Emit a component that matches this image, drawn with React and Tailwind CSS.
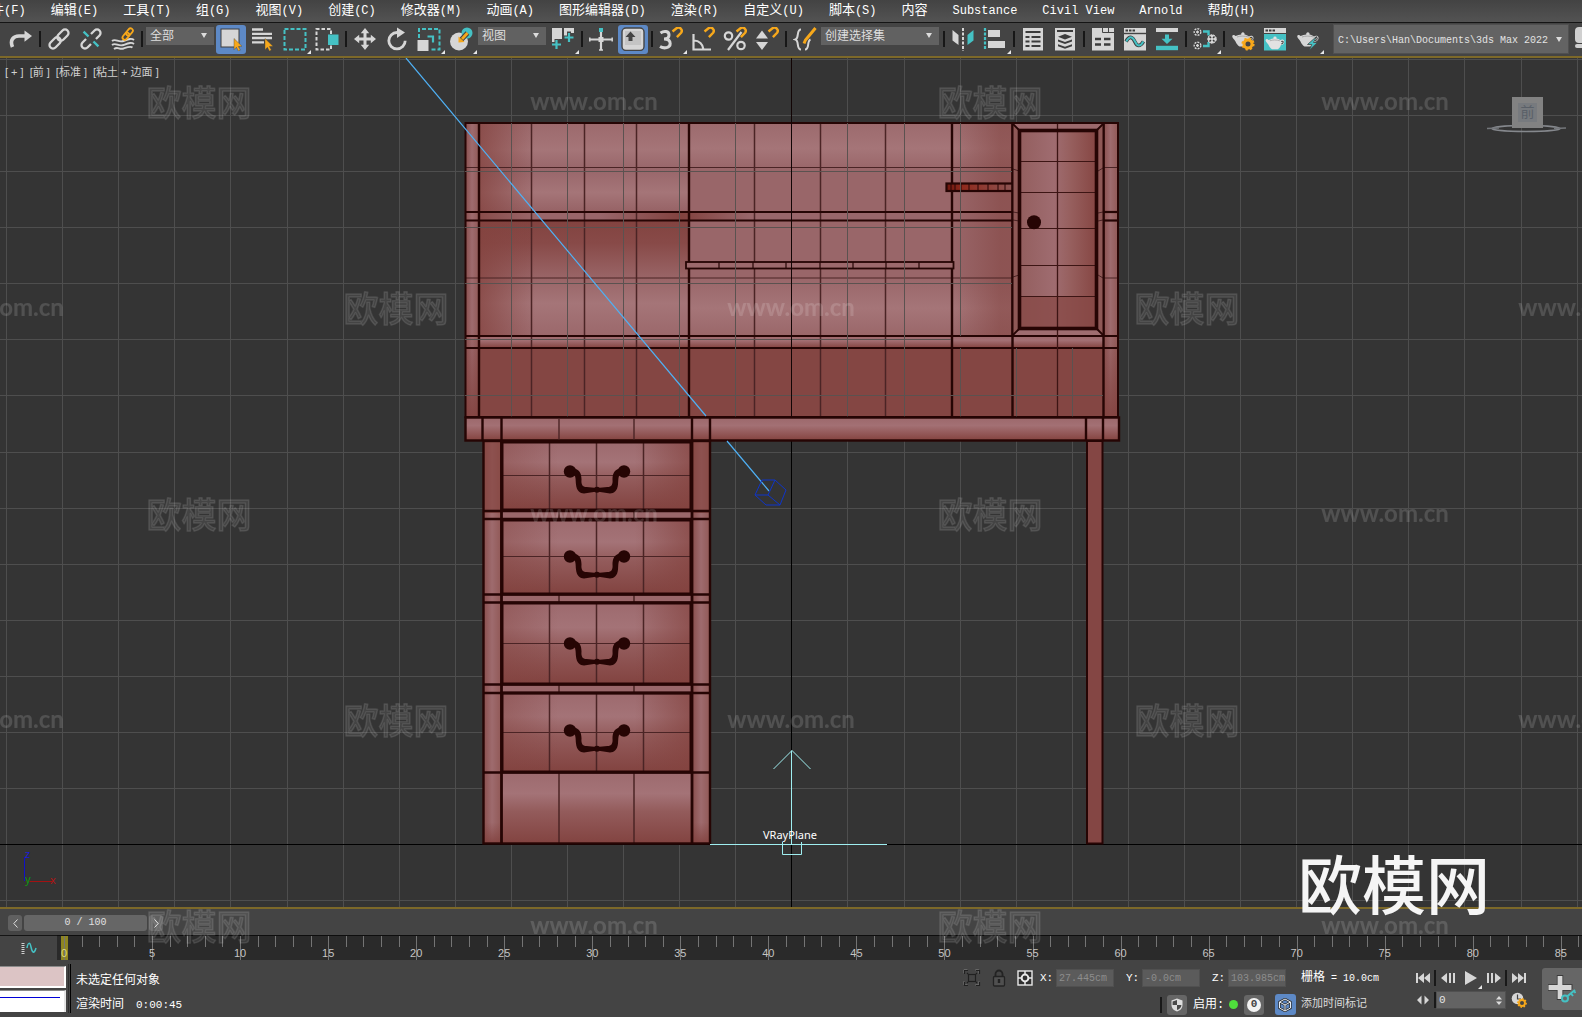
import React from "react";

const CJK = "font-['Liberation_Sans','Noto_Sans_CJK_SC',sans-serif]";
const MONO = "font-['Liberation_Mono','Noto_Sans_CJK_SC',monospace]";

/* ---------- menu bar ---------- */

const MENUS = [
  ["文件", "(F)"], ["编辑", "(E)"], ["工具", "(T)"], ["组", "(G)"], ["视图", "(V)"],
  ["创建", "(C)"], ["修改器", "(M)"], ["动画", "(A)"], ["图形编辑器", "(D)"],
  ["渲染", "(R)"], ["自定义", "(U)"], ["脚本", "(S)"], ["内容", ""],
  ["", "Substance"], ["", "Civil View"], ["", "Arnold"], ["帮助", "(H)"],
];

function MenuBar() {
  return (
    <nav className="shrink-0 overflow-hidden border-b border-[#151515] bg-gradient-to-b from-[#434343] to-[#535353]">
      <div className={`-ml-[22px] flex h-[22px] gap-[25px] whitespace-nowrap pb-px text-white ${MONO}`}>
        {MENUS.map(([zh, en]) => (
          <button key={zh + en} type="button" className="flex shrink-0 items-center">
            {zh && <span className="text-[13px] leading-5">{zh}</span>}
            {en && <span className="text-xs leading-5">{en}</span>}
          </button>
        ))}
      </div>
    </nav>
  );
}

/* ---------- toolbar ---------- */

const L = "#d6d6d6";
const T = "#45c1c4";
const Y = "#f7a81b";

function Tool({ label, active, flyout, children }) {
  return (
    <button
      type="button"
      aria-label={label}
      title={label}
      className={
        "relative flex h-[29px] shrink-0 items-center justify-center " +
        (active ? "mx-px w-[30px] rounded-[3px] bg-[#5d89c6]" : "w-8")
      }
    >
      <svg viewBox="0 0 24 24" className="size-6" fill="none" aria-hidden="true">
        {children}
      </svg>
      {flyout && (
        <svg viewBox="0 0 4 4" className="absolute bottom-0 right-0 size-1" aria-hidden="true">
          <path d="M4 0V4H0Z" fill="#e8e8e8" />
        </svg>
      )}
    </button>
  );
}

const Sep = () => <span className="mx-0.5 h-4 w-0.5 shrink-0 bg-[#171717]" />;

const Cursor = () => (
  <path d="M15 11.5l8 7.8-3.600.2 2 3.6-2 1-2-3.800-2.400 2.400z" fill={Y} stroke="#444" strokeWidth=".4" />
);

const Magnet = () => (
  <path d="M13.500 4.500l4-3.300a3.300 3.300 0 0 1 4.600 4.600l-4.200 4.400" stroke={Y} strokeWidth="2.400" />
);

const TEAPOT = "M4.500 9c-1-1.500-3-1.200-3.300.1C1 11 3 12 4.500 14.500 5.500 17 7 18.500 8.500 19.500h6.500c2-1 3-2.500 3.500-4.500 3-.5 4.300-2.500 4-4.500-.4-2-3-2.500-4.500-1-1.500-1.200-3-1.700-4.500-2a1.700 1.700 0 1 0-3.200 0c-2 .3-3.600.8-5.800 1.500z";

function Teapot({ fill = L }) {
  return (
    <g>
      <path d={TEAPOT} fill={fill} />
      <path d="M19 10.800c1.300-.8 2.300-.2 2.200.9-.1 1-1 1.700-2.200 1.900" stroke="#444" strokeWidth="1.200" />
      <path d="M6 10c3-1.200 8-1.200 11.500 0" stroke="#888" strokeWidth=".6" />
    </g>
  );
}

function Combo({ label, value, className }) {
  return (
    <div className={"relative h-[18px] shrink-0 bg-[#616161] " + className}>
      <select
        aria-label={label}
        defaultValue={value}
        className={`-mt-0.5 block h-[22px] w-full appearance-none pl-1 pr-4 text-xs text-[#dedede] ${CJK}`}
      >
        <option>{value}</option>
      </select>
      <svg viewBox="0 0 6 5" className="pointer-events-none absolute right-[7px] top-[6px] h-[5px] w-[6px]">
        <path d="M0 0H6L3 5Z" fill="#dcdcdc" />
      </svg>
    </div>
  );
}

function Grip({ className }) {
  return (
    <span
      className={
        "shrink-0 bg-[radial-gradient(circle,#a5a5a5_35%,transparent_40%)] bg-[length:2px_2px] " + className
      }
    />
  );
}

function Toolbar() {
  return (
    <div className="shrink-0 overflow-hidden bg-[#444444]">
      <div className="flex h-[33px] items-center pb-px pl-[5px]">
        <Tool label="重做">
          <path d="M3.500 20C.5 13 4.500 9 10 9h6" stroke={L} strokeWidth="3.600" />
          <path d="M15.500 3.500l7.500 5.500-7.500 5.700z" fill={L} />
        </Tool>
        <Sep />
        <Tool label="选择并链接">
          <g stroke={L} strokeWidth="2.300" transform="rotate(-45 12 12)">
            <rect x="0" y="8.500" width="13" height="7" rx="3.500" />
            <rect x="11" y="8.500" width="13" height="7" rx="3.500" />
          </g>
        </Tool>
        <Tool label="取消链接选择">
          <g transform="rotate(-45 12 12)">
            <path d="M8.500 15.500H3.500a3.500 3.500 0 0 1 0-7H8.500M15.500 8.500h5a3.500 3.500 0 0 1 0 7H15.500" stroke={L} strokeWidth="2.300" />
            <path d="M12 1.500v7M12 15.500v7" stroke={T} strokeWidth="2.400" />
          </g>
        </Tool>
        <Tool label="绑定到空间扭曲">
          <path d="M1 14c4-3 6 2 11.500 0s8-3 10.500-1M1 18c4-3 6 2 11.500 0s8-3 10.500-1M3 22c4-3 5 1 9.500-.500s7-2.500 9-1" stroke={L} strokeWidth="1.900" />
          <g stroke={Y} strokeWidth="1.800" transform="rotate(-50 17 7)">
            <rect x="10" y="4.500" width="8" height="4.600" rx="2.300" />
            <rect x="15.500" y="4.500" width="8" height="4.600" rx="2.300" />
          </g>
        </Tool>
        <Sep />
        <Combo label="选择过滤器" value="全部" className="mb-1.5 ml-px mr-px w-[68px]" />
        <Tool label="选择对象" active>
          <rect x="2" y="2" width="18" height="18" fill={L} stroke="#3e3e3e" />
          <Cursor />
        </Tool>
        <Tool label="按名称选择">
          <path d="M1 2.500h11M1 6.800h20M1 11h20M1 15.300h12" stroke={L} strokeWidth="2.300" />
          <g transform="translate(-1 0)"><Cursor /></g>
        </Tool>
        <Tool label="矩形选择区域" flyout>
          <rect x="1.500" y="2" width="21" height="20.500" stroke={T} strokeWidth="2" strokeDasharray="4 2" />
        </Tool>
        <Tool label="窗口/交叉">
          <path d="M16 7V2H1.500v20.500H16v-4" stroke={L} strokeWidth="2" strokeDasharray="3.500 2" />
          <rect x="13" y="7.500" width="10.500" height="10.500" fill={T} />
        </Tool>
        <Sep />
        <Tool label="选择并移动">
          <path d="M12 1l4.200 5.200H13.500v4.300h4.300V7.800L23 12l-5.200 4.200v-2.700h-4.300v4.300h2.700L12 23l-4.200-5.200h2.700v-4.300H6.200v2.700L1 12l5.200-4.200v2.700h4.300V6.200H7.800z" fill={L} />
        </Tool>
        <Tool label="选择并旋转">
          <path d="M12 5.500a8.200 8.200 0 1 0 8.200 8.300" stroke={L} strokeWidth="2.800" />
          <path d="M12 .5L20 5.500 12 11z" fill={L} />
        </Tool>
        <Tool label="选择并均匀缩放" flyout>
          <path d="M2 11V2h20.500v20.500H13" stroke={T} strokeWidth="2" strokeDasharray="4 2" />
          <rect x=".5" y="13" width="11" height="11" fill={L} />
          <path d="M10.500 9.500h5.500v6" stroke={T} strokeWidth="2.200" />
        </Tool>
        <Tool label="选择并放置" flyout>
          <circle cx="10" cy="14.500" r="9" fill={L} />
          <circle cx="18" cy="6" r="5.500" fill={T} />
          <path d="M18.500 6L12 13" stroke="#444" strokeWidth="5" />
          <path d="M18.500 6L13 12" stroke={Y} strokeWidth="2.800" />
          <path d="M9.500 15.500V9.500l6 5.500z" fill={Y} />
        </Tool>
        <Combo label="参考坐标系" value="视图" className="mb-1.5 ml-px mr-px w-[68px]" />
        <Tool label="使用轴点中心" flyout>
          <path d="M1 1h10v11H7.500L4 16H1zM13 1h10v5h-3l-3 3h-4z" fill={L} />
          <path d="M5.500 12v10M.5 17h10M18 4.500v12M13 10.500h10" stroke="#444" strokeWidth="4" />
          <path d="M5.500 13v9M1 17.500h9M18 6v9M13.500 10.500h9" stroke={T} strokeWidth="2.200" />
        </Tool>
        <Sep />
        <Tool label="选择并操纵">
          <path d="M12 5v18M1 12.500h22" stroke={L} strokeWidth="2.200" />
          <rect x="9.500" y="10" width="5" height="5" fill={L} />
          <rect x="10" y="1" width="4" height="4" fill={T} />
          <path d="M.8 10.500v4M23.200 10.500v4M10 23h4" stroke={L} strokeWidth="1.500" />
        </Tool>
        <Tool label="键盘快捷键覆盖切换" active>
          <rect x="1" y="1" width="22" height="22.500" rx="4" fill={L} stroke="#444" strokeWidth="1.400" />
          <path d="M4 4h16v14H4z" fill="#c4c4c4" />
          <path d="M9.500 4.500l5 5.500h-3v4h-4v-4h-3z" fill="#444" />
        </Tool>
        <Sep />
        <Tool label="捕捉开关" flyout>
          <path d="M1.500 6C5 3.500 10 4 10 8c0 3-2.500 4-5 4 3 0 6.200 1 6.200 4.500 0 4.500-6 5.500-10.200 3" stroke={L} strokeWidth="3" />
          <Magnet />
        </Tool>
        <Tool label="角度捕捉切换">
          <path d="M2.500 7v15.500H20M3 13.500c5 0 9 3.500 9.500 9" stroke={L} strokeWidth="2.200" />
          <Magnet />
        </Tool>
        <Tool label="百分比捕捉切换">
          <path d="M18.500 5L5 23" stroke={L} strokeWidth="2.200" />
          <circle cx="5.500" cy="9" r="3.700" stroke={L} strokeWidth="2.200" />
          <circle cx="18" cy="18.500" r="3.700" stroke={L} strokeWidth="2.200" />
          <Magnet />
        </Tool>
        <Tool label="微调器捕捉切换">
          <path d="M7 3.500l6 8H1zM1 15h12l-6 8z" fill={L} />
          <Magnet />
        </Tool>
        <Sep />
        <Tool label="编辑命名选择集">
          <path d="M8 2.500C3 2.500 6.500 11 2.500 12.500 6.500 14 3 22.500 8 22.500M12 22.500c5 0 1.500-8.500 5.500-10" stroke={L} strokeWidth="2" />
          <path d="M22.500 1L12.500 13l-1.500 3.500" stroke={Y} strokeWidth="3" />
        </Tool>
        <Combo label="创建选择集" value="创建选择集" className="mb-1.5 mr-0.5 w-[118px]" />
        <Sep />
        <Tool label="镜像">
          <path d="M1.500 3l6 5v10l-6-4.500z" fill={L} />
          <path d="M12 1v23" stroke={L} strokeWidth="2" strokeDasharray="3 1.500" />
          <path d="M22.500 3l-6 5v10l6-4.500z" fill={T} />
        </Tool>
        <Tool label="对齐" flyout>
          <path d="M2 1v22" stroke={T} strokeWidth="2.200" strokeDasharray="3 1.500" />
          <rect x="5" y="3" width="12" height="7" fill={L} />
          <rect x="5" y="14" width="17" height="7" fill={L} />
        </Tool>
        <Sep />
        <Tool label="切换场景资源管理器">
          <rect x="2" y="1" width="20" height="22.500" fill={L} />
          <path d="M4.500 5h15M4.500 10h4M10.500 10h9M4.500 14.500h4M10.500 14.500h9M4.500 19h4M10.500 19h9" stroke="#3c3c3c" strokeWidth="2" />
        </Tool>
        <Tool label="切换层资源管理器">
          <rect x="2" y="1" width="20" height="22.500" fill={L} />
          <path d="M4 4h16" stroke="#3c3c3c" strokeWidth="2" />
          <path d="M12 7l7 2.700-7 2.700-7-2.700zM5 12.500l7 2.500 7-2.500v2L12 17l-7-2.500zM5 17.200l7 2.500 7-2.500v2L12 21.800l-7-2.600z" fill="#3c3c3c" />
        </Tool>
        <Sep />
        <Tool label="显示功能区">
          <rect x="1" y="1" width="22" height="22.500" fill={L} />
          <path d="M11.500 1v4.500H23M17.500 1v4" stroke="#444" />
          <path d="M4 12h6M13 12h6.500M4 17.500h6M13 17.500h6.500" stroke="#3c3c3c" strokeWidth="2.600" />
        </Tool>
        <Tool label="曲线编辑器">
          <rect x="1" y="1" width="22" height="22.500" fill={L} />
          <path d="M1 6.500h22" stroke="#444" strokeWidth="1.400" />
          <path d="M2.500 3.500h10" stroke="#3c3c3c" strokeWidth="2.200" strokeDasharray="2.500 1" />
          <path d="M3 14.500c4-7 7-4 9 .5s5 5 8.500-.5" stroke="#3c3c3c" strokeWidth="3.600" />
          <path d="M3.300 14.500c4-7 7-4 9 .5s5 5 8-.5" stroke={T} strokeWidth="2" />
        </Tool>
        <Tool label="图解视图">
          <path d="M1 3h22" stroke={L} strokeWidth="4" />
          <path d="M1 21h22" stroke={T} strokeWidth="4.400" />
          <path d="M10 7.500h4v4.300h3.500L12 17l-5.500-5.200H10z" fill={T} />
        </Tool>
        <Sep />
        <Tool label="材质编辑器" flyout>
          <path d="M10 4.500h5.500v4M10 19h5.500v-4" stroke={T} strokeWidth="2.400" />
          <g fill="#3b3b3b" stroke={L} strokeWidth="1.400" strokeDasharray="2 1">
            <circle cx="4.500" cy="5" r="3.300" />
            <circle cx="4.500" cy="18.500" r="3.300" />
          </g>
          <path d="M3 5h3M3 18.500h3M4.500 3.500v3M4.500 17v3" stroke={L} strokeWidth="1.300" />
          <circle cx="19" cy="12" r="4.300" fill={L} stroke={L} strokeDasharray="2 1" />
          <path d="M16.500 9.500l1.500 1.500M21.500 9.500L20 11M16.500 14.500l1.500-1.500M21.500 14.500L20 13" stroke="#3b3b3b" strokeWidth="1.500" />
        </Tool>
        <Sep />
        <Tool label="渲染设置">
          <Teapot />
          <circle cx="17" cy="17" r="4" fill="#444" stroke={Y} strokeWidth="3" />
          <circle cx="17" cy="17" r="5.600" stroke={Y} strokeWidth="2" strokeDasharray="2.200 2.200" />
        </Tool>
        <Tool label="渲染帧窗口">
          <rect x="1" y="1" width="22" height="22.500" fill={T} />
          <path d="M1 1h22v5H1z" fill={L} />
          <path d="M2.500 3.500h10" stroke="#3c3c3c" strokeWidth="2.200" strokeDasharray="2.500 1" />
          <path d="M1 6.500h22" stroke="#444" strokeWidth="1" />
          <g transform="translate(1.500 5) scale(.88)"><Teapot fill="#e2e2e2" /></g>
        </Tool>
        <span className="w-px shrink-0" />
        <Tool label="渲染产品" flyout>
          <Teapot />
          <path d="M20.500 9.500l-9 8h4.300l-2.800 6 8.500-8h-4z" fill={T} stroke="#444" strokeWidth=".8" />
        </Tool>
        <Grip className="ml-0.5 mr-[3px] h-7 w-1" />
        <div className="relative h-[30px] w-[236px] shrink-0 border border-[#505050] bg-[#636363]">
          <select
            aria-label="项目文件夹"
            defaultValue="C:\Users\Han\Documents\3ds Max 2022"
            className={`size-full appearance-none pl-1 pr-4 text-[10px] text-[#e2e2e2] ${MONO}`}
          >
            <option>{"C:\\Users\\Han\\Documents\\3ds Max 2022"}</option>
          </select>
          <svg viewBox="0 0 6 5" className="pointer-events-none absolute right-[6px] top-3 h-[5px] w-[6px]">
            <path d="M0 0H6L3 5Z" fill="#dcdcdc" />
          </svg>
        </div>
        <span className="ml-1.5 flex h-6 shrink-0 flex-col gap-px">
          <span className="h-4 w-2 rounded-l-sm bg-[#d0d0d0]" />
          <span className="h-1 w-2 rounded-l-sm bg-[#d0d0d0]" />
        </span>
      </div>
    </div>
  );
}

/* ---------- viewport scene ---------- */

const GX = [6, 62, 118, 174, 230, 287, 343, 399, 455, 511, 567, 623, 679, 735, 847, 904, 960, 1016, 1072, 1128, 1184, 1240, 1296, 1352, 1408, 1464, 1521, 1577];
const GY = [59, 115, 171, 227, 283, 339, 395, 452, 508, 564, 620, 676, 732, 788, 900];
const INK = "#260504";

const V = ({ x, y1, y2, w = 1, c = "#4b2425" }) => (
  <path d={`M${x} ${y1}V${y2}`} stroke={c} strokeWidth={w} />
);
const H = ({ y, x1, x2, w = 1, c = "#4b2425" }) => (
  <path d={`M${x1} ${y}H${x2}`} stroke={c} strokeWidth={w} />
);

function Handle({ y }) {
  return (
    <g transform={`translate(597 ${y})`} fill={INK}>
      <circle cx="-27" cy="0" r="6.200" />
      <circle cx="27" cy="0" r="6.200" />
      <path d="M-23-3C-17-2-15.500 3-15.500 8c-.5 5 1 7.500 5 7.500q5 .3 10.500 1 5.500-.7 10.500-1c4 0 5.500-2.500 5-7.500 0-5 1.500-10 7.500-11l1 5C21 4 21.500 8 21 13c-.5 6-4 9-8 9l-13-2-13 2c-4 0-7.500-3-8-9-.500-5 0-9-3-11z" />
      <circle cx="0" cy="18.300" r="3" />
    </g>
  );
}

function Drawer({ y1, y2, mid, knob }) {
  return (
    <g>
      <rect x="501" y={y1} width="191" height={y2 - y1} fill="url(#drawerV)" />
      <rect x="501" y={y1} width="191" height={y2 - y1} fill="url(#drawerH)" />
      {[549.5, 596.5, 643.5].map((x) => <V key={x} x={x} y1={y1} y2={y2} w={1.500} />)}
      <H y={mid} x1={501} x2={692} />
      <rect x="502" y={y1} width="189" height={y2 - y1} stroke={INK} strokeWidth="3" fill="none" />
      <Handle y={knob} />
    </g>
  );
}

function Scene() {
  return (
    <svg viewBox="0 58 1582 849" preserveAspectRatio="xMidYMid slice" className="absolute inset-0 size-full" role="img" aria-label="书桌模型前视图">
      <defs>
        <linearGradient id="backV" x1="0" y1="123" x2="0" y2="336" gradientUnits="userSpaceOnUse">
          <stop offset="0" stopColor="#9c6a6d" />
          <stop offset=".12" stopColor="#a57578" />
          <stop offset=".22" stopColor="#996669" />
          <stop offset=".72" stopColor="#996669" />
          <stop offset=".87" stopColor="#a57578" />
          <stop offset="1" stopColor="#9a6769" />
        </linearGradient>
        <linearGradient id="cellTop" x1="0" y1="123" x2="0" y2="212" gradientUnits="userSpaceOnUse">
          <stop offset="0" stopColor="#9c696c" />
          <stop offset=".3" stopColor="#a57578" />
          <stop offset=".52" stopColor="#98666a" />
          <stop offset=".78" stopColor="#a57578" />
          <stop offset="1" stopColor="#966265" />
        </linearGradient>
        <linearGradient id="cellLow" x1="0" y1="220" x2="0" y2="336" gradientUnits="userSpaceOnUse">
          <stop offset="0" stopColor="#824340" />
          <stop offset=".2" stopColor="#884a48" />
          <stop offset=".5" stopColor="#996567" />
          <stop offset=".72" stopColor="#a57578" />
          <stop offset="1" stopColor="#9b686b" />
        </linearGradient>
        <linearGradient id="shadeL" x1="479" y1="0" x2="535" y2="0" gradientUnits="userSpaceOnUse">
          <stop offset="0" stopColor="#84433f" stopOpacity=".75" />
          <stop offset="1" stopColor="#84433f" stopOpacity="0" />
        </linearGradient>
        <linearGradient id="shadeR" x1="952" y1="0" x2="1012" y2="0" gradientUnits="userSpaceOnUse">
          <stop offset="0" stopColor="#854744" stopOpacity="0" />
          <stop offset=".8" stopColor="#854744" stopOpacity=".6" />
          <stop offset="1" stopColor="#854744" stopOpacity=".6" />
        </linearGradient>
        <linearGradient id="shelfShade" x1="0" y1="0" x2="1" y2="0">
          <stop offset="0" stopColor="#82423f" stopOpacity="0" />
          <stop offset=".55" stopColor="#82423f" />
          <stop offset="1" stopColor="#82423f" stopOpacity="0" />
        </linearGradient>
        <linearGradient id="edgeH" x1="0" y1="0" x2="1" y2="0">
          <stop offset="0" stopColor="#894e4c" />
          <stop offset=".5" stopColor="#9e6b6e" />
          <stop offset="1" stopColor="#915957" />
        </linearGradient>
        <linearGradient id="dim" x1="0" y1="0" x2="0" y2="1">
          <stop offset="0" stopColor="#82423f" stopOpacity="0" />
          <stop offset=".7" stopColor="#82423f" stopOpacity="0" />
          <stop offset="1" stopColor="#82423f" stopOpacity=".9" />
        </linearGradient>
        <linearGradient id="bar" x1="0" y1="0" x2="0" y2="1">
          <stop offset="0" stopColor="#9c686b" />
          <stop offset=".35" stopColor="#a37074" />
          <stop offset="1" stopColor="#84433f" />
        </linearGradient>
        <linearGradient id="drawerV" x1="0" y1="0" x2="0" y2="1">
          <stop offset="0" stopColor="#9d6a6e" />
          <stop offset=".3" stopColor="#a47377" />
          <stop offset=".55" stopColor="#935b5b" />
          <stop offset="1" stopColor="#824340" />
        </linearGradient>
        <linearGradient id="drawerH" x1="0" y1="0" x2="1" y2="0">
          <stop offset="0" stopColor="#84433f" stopOpacity=".4" />
          <stop offset=".3" stopColor="#84433f" stopOpacity="0" />
          <stop offset=".7" stopColor="#84433f" stopOpacity="0" />
          <stop offset="1" stopColor="#84433f" stopOpacity=".7" />
        </linearGradient>
        <linearGradient id="door" x1="0" y1="0" x2="1" y2="0">
          <stop offset="0" stopColor="#935e5e" />
          <stop offset=".45" stopColor="#9f6c70" />
          <stop offset=".65" stopColor="#97605f" />
          <stop offset="1" stopColor="#864643" />
        </linearGradient>
        <linearGradient id="redShelf" x1="0" y1="0" x2="1" y2="0">
          <stop offset="0" stopColor="#6e170e" />
          <stop offset=".25" stopColor="#8f2a1d" />
          <stop offset="1" stopColor="#8d5553" />
        </linearGradient>
      </defs>

      <rect x="-2000" y="58" width="6000" height="849" fill="#343434" />
      <g stroke="#4e4e4e" strokeWidth="1">
        {GX.map((x) => <path key={x} d={`M${x}.5 58V907`} />)}
        {GY.map((y) => <path key={y} d={`M0 ${y}.5H1582`} />)}
      </g>
      <path d="M791.5 58V907M0 844.5H1582" stroke="#000" />

      {/* upper cabinet */}
      <rect x="465" y="123" width="653" height="294" fill="#844643" />
      <rect x="689" y="123" width="323" height="213" fill="url(#backV)" />
      <rect x="479" y="123" width="210" height="89" fill="url(#cellTop)" />
      <rect x="479" y="212" width="533" height="9" fill="#99666a" />
      <rect x="600" y="212" width="150" height="9" fill="url(#shelfShade)" />
      <rect x="479" y="220" width="210" height="116" fill="url(#cellLow)" />
      <rect x="479" y="123" width="60" height="213" fill="url(#shadeL)" />
      <rect x="952" y="123" width="60" height="213" fill="url(#shadeR)" />
      <rect x="479" y="336" width="624" height="12" fill="url(#bar)" />
      <rect x="465" y="123" width="14" height="294" fill="url(#edgeH)" />
      <rect x="465" y="123" width="14" height="294" fill="url(#dim)" />
      <rect x="1103" y="123" width="15" height="294" fill="url(#edgeH)" />
      <rect x="1103" y="123" width="15" height="294" fill="url(#dim)" />

      {[531.5, 584.5, 636.5, 754.5, 820.5, 885.5].map((x) => <V key={x} x={x} y1={123} y2={417} w={1.500} />)}
      {[167.5, 278].map((y) => (
        <g key={y}>
          <H y={y} x1={465} x2={1012} />
          <H y={y} x1={1103} x2={1118} />
        </g>
      ))}
      {[212, 220.5].map((y) => (
        <g key={y}>
          <H y={y} x1={465} x2={1012} w={2.200} c={INK} />
          <H y={y} x1={1103} x2={1118} w={2.200} c={INK} />
        </g>
      ))}
      <H y={336} x1={465} x2={1118} w={2.200} c={INK} />
      <H y={348} x1={465} x2={1118} w={2.200} c={INK} />
      {[479, 689, 952, 1012.5, 1103.5].map((x) => <V key={x} x={x} y1={123} y2={417} w={2.400} c={INK} />)}

      {/* shelves */}
      <rect x="686" y="262" width="267.500" height="6.500" fill="#9c696c" stroke={INK} strokeWidth="1.800" />
      {[719, 753, 786, 820, 853, 886, 919].map((x) => <V key={x} x={x} y1={262} y2={268} w={1.200} c={INK} />)}
      <rect x="946.500" y="183.500" width="66" height="7.500" fill="url(#redShelf)" stroke={INK} strokeWidth="2.200" />
      {[951, 955, 961, 969, 978, 988, 998, 1005].map((x) => <V key={x} x={x} y1={184} y2={191} c={INK} />)}

      {/* door */}
      <rect x="1013" y="123" width="90" height="212" fill="#8f5856" />
      <path d="M1013 124H1103L1097 130H1019Z" fill="#9c696c" />
      <path d="M1013 335H1103L1097 328H1019Z" fill="#9f6d70" />
      <path d="M1013 169l6 2M1013 212l6 1M1013 220l6 1M1013 277l6-2M1098 171l5-3M1098 213l5-1M1098 221l5-1M1098 275l5 3" stroke="#4b2425" />
      <path d="M1013 124l6 6M1103 124l-6 6M1013 335l6-6M1103 335l-6-6" stroke={INK} strokeWidth="1.800" />
      <rect x="1012.500" y="123" width="91" height="213" fill="none" stroke={INK} strokeWidth="2" />
      <rect x="1019.500" y="130.500" width="77" height="198" fill="url(#door)" />
      <rect x="1019.500" y="296" width="77" height="33" fill="#874846" opacity=".75" />
      {[161.5, 192.5, 228.5, 265.5, 296.5].map((y) => <H key={y} y={y} x1={1020} x2={1097} w={1.200} c="#3d1514" />)}
      <V x={1057.500} y1={123} y2={417} w={1.300} c="#3d1514" />
      <rect x="1019.500" y="130.500" width="77" height="198" fill="none" stroke={INK} strokeWidth="3.600" />
      <circle cx="1034" cy="222.300" r="7" fill={INK} />
      <rect x="465.500" y="123" width="652.500" height="294" fill="none" stroke={INK} strokeWidth="2" />

      {/* construction grid drawn through the cabinet */}
      <g stroke="#5b5250" strokeWidth="1">
        {[511, 567, 623, 679, 735, 847, 904].map((x) => <path key={x} d={`M${x}.5 123V417`} />)}
        <path d="M960.5 123V336M960.5 348V417M1016.500 348V417M1072.500 348V417" />
        <path d="M465 171.500H1012M465 227.500H1012M465 283.500H1012M465 339.500H951M465 395.500H1103" />
      </g>
      <path d="M791.5 58V417" stroke="#120505" />

      {/* table top */}
      <rect x="465.500" y="417.500" width="653.500" height="23" fill="url(#bar)" stroke={INK} strokeWidth="2.400" />
      {[482.5, 501.5, 692, 710, 1086, 1103].map((x) => <V key={x} x={x} y1={417} y2={441} w={2.400} c={INK} />)}
      {[559, 634].map((x) => <V key={x} x={x} y1={418} y2={440} w={1.400} />)}

      {/* pedestal */}
      <rect x="483" y="441" width="227" height="403" fill="#9a676a" />
      <rect x="483" y="441" width="18" height="403" fill="url(#edgeH)" />
      <rect x="692" y="441" width="18" height="403" fill="url(#edgeH)" />
      <rect x="483" y="441" width="18" height="72" fill="#84433f" opacity=".65" />
      <rect x="692" y="441" width="18" height="72" fill="#84433f" opacity=".65" />
      <rect x="501" y="772" width="191" height="72" fill="url(#drawerV)" />
      <rect x="483" y="772" width="18" height="72" fill="url(#dim)" />
      <rect x="692" y="772" width="18" height="72" fill="url(#dim)" />
      {[559, 634].map((x) => <V key={x} x={x} y1={441} y2={844} w={1.500} />)}
      <Drawer y1={442} y2={510} mid={475.500} knob={471.500} />
      <Drawer y1={520} y2={594} mid={556.500} knob={556.500} />
      <Drawer y1={603} y2={684} mid={643.500} knob={643.500} />
      <Drawer y1={693} y2={772} mid={732.500} knob={730.500} />
      {[511, 519, 594.5, 602.5, 684.5, 693, 772.5].map((y) => <H key={y} y={y} x1={483} x2={710} w={2.400} c={INK} />)}
      {[501.5, 692].map((x) => <V key={x} x={x} y1={441} y2={844} w={2.800} c={INK} />)}
      <rect x="483.500" y="441" width="226.500" height="402.500" fill="none" stroke={INK} strokeWidth="2.400" />

      {/* right leg */}
      <rect x="1087" y="441" width="15.500" height="402.500" fill="#844644" stroke={INK} strokeWidth="2" />

      {/* light target line and gizmo */}
      <path d="M406 58L706 416M727 441L769 491" stroke="#4fb0f4" strokeWidth="1.200" />
      <path d="M755 495l7-15h13l11 10-6 15h-14zM755 495h13l12 10M768 495l7-15" stroke="#0f35c8" fill="none" />

      <g stroke="#9feef0" fill="none" strokeWidth="1">
        <path d="M710 844.500H887M791.500 750.500V844M773.500 769L792 750.500 810.500 769M782.500 842V854.500H801.500V842" />
      </g>
      <text x="763" y="839" fill="#fff" fontSize="11" fontFamily="Noto Sans, sans-serif">VRayPlane</text>

      {/* axis tripod */}
      <path d="M24.500 857V881" stroke="#1010c8" />
      <path d="M29 881.500H52" stroke="#a31212" />
      <g fontFamily="Noto Sans, sans-serif" fontSize="11">
        <text x="25" y="858" fill="#1c1cd8">z</text>
        <text x="25" y="883" fill="#119611">y</text>
        <text x="50" y="884" fill="#b01414">x</text>
      </g>

      {/* view cube */}
      <ellipse cx="1526" cy="128.500" rx="34" ry="3" fill="none" stroke="#85888d" strokeWidth="1.600" />
      <path d="M1487 128.500l12-.5M1554 128.500l12-.5" stroke="#74777b" strokeWidth="1.500" />
      <rect x="1512" y="97" width="31" height="31" fill="#828282" />
      <rect x="1518" y="103" width="19" height="19" fill="#777a7e" />
      <text x="1527.500" y="117" textAnchor="middle" fill="#5a6068" fontSize="14" fontFamily="Noto Sans CJK SC, sans-serif">前</text>
    </svg>
  );
}

function Viewport() {
  return (
    <main className="relative min-h-[300px] flex-1 overflow-hidden border-y-2 border-[#7d6929] bg-[#343434]">
      <Scene />
      <div className={`absolute left-[5px] top-1.5 flex gap-1.5 whitespace-nowrap text-[11px] leading-4 text-[#d0d0d0] ${CJK}`}>
        <button type="button">[ + ]</button>
        <button type="button">[前 ]</button>
        <button type="button">[标准 ]</button>
        <button type="button">[粘土 + 边面 ]</button>
      </div>
    </main>
  );
}

/* ---------- time line ---------- */

function TimeSlider() {
  return (
    <div className={`flex h-[26px] shrink-0 items-center gap-0.5 bg-[#444444] pb-1 pl-2 pt-1.5 text-[#e0e0e0] ${MONO}`}>
      <button type="button" aria-label="上一帧" className="flex h-4 w-3.5 items-center justify-center rounded-[3px] bg-[#606060]">
        <svg viewBox="0 0 5 9" className="h-[9px] w-[5px]" fill="none" stroke="#e0e0e0"><path d="M4.500 .5L.8 4.500l3.700 4" /></svg>
      </button>
      <button type="button" className="h-4 w-[123px] rounded-[3px] bg-[#666666] text-[10px] leading-4">0 / 100</button>
      <button type="button" aria-label="下一帧" className="flex h-4 w-3.5 items-center justify-center rounded-[3px] bg-[#606060]">
        <svg viewBox="0 0 5 9" className="h-[9px] w-[5px]" fill="none" stroke="#e0e0e0"><path d="M.5 .5l3.700 4-3.700 4" /></svg>
      </button>
    </div>
  );
}

function Ruler() {
  const frames = Array.from({ length: 86 }, (_, i) => i);
  return (
    <div className="flex h-[25px] shrink-0 bg-[#444444]">
      <button type="button" aria-label="打开迷你曲线编辑器" className="flex w-[57px] shrink-0 items-center justify-center border-t border-[#151515]">
        <svg viewBox="0 0 16 12" className="h-3 w-4" fill="none">
          <path d="M2 1v11" stroke="#d0d0d0" strokeWidth="3" strokeDasharray="1 1" />
          <path d="M6 6C7 0 9 0 10 5s3 8 5 1" stroke={T} strokeWidth="1.500" />
        </svg>
      </button>
      <div className="flex min-w-0 flex-1 border-t border-[#0e0e0e] bg-[#2a2a2a] pl-[7px] pr-0.5">
        {frames.map((f) => (
          <div key={f} className="relative min-w-0 flex-1">
            {f === 0 && <span className="absolute -left-[3px] top-0 h-6 w-[7px] bg-[#8d8521]" />}
            <span className={"absolute left-0 top-0 w-px bg-[#747474] " + (f % 5 === 0 ? "h-6" : "h-[11px]")} />
            {f % 5 === 0 && (
              <span className={"absolute -left-3 bottom-0 w-6 text-center text-[11px] leading-[14px] " + (f === 0 ? "text-[#dcd87c] " : "text-[#c4c4c4] ") + CJK}>
                {f}
              </span>
            )}
          </div>
        ))}
        <span className="h-[11px] w-px bg-[#747474]" />
      </div>
    </div>
  );
}

/* ---------- status bar ---------- */

function Coord({ axis, value }) {
  return (
    <label className="flex items-center">
      <span className="w-4 text-[11px] text-white">{axis}:</span>
      <input
        defaultValue={value}
        disabled
        className="h-[18px] w-[58px] border border-[#505050] bg-[#5b5b5b] pl-0.5 text-[10px] text-[#8d8d8d]"
      />
    </label>
  );
}

function PlayBtn({ label, children }) {
  return (
    <button type="button" aria-label={label} className="relative flex h-5 w-[23px] items-center justify-center">
      <svg viewBox="0 0 16 12" className="h-3 w-4" fill={L}>{children}</svg>
    </button>
  );
}

const VSep = () => <span className="h-4 w-0.5 shrink-0 bg-[#191919]" />;

function StatusBar() {
  return (
    <footer className={`flex h-[57px] shrink-0 bg-[#444444] text-white ${MONO}`}>
      <div className="flex w-[66px] shrink-0 flex-col gap-0.5 pt-1.5">
        <input aria-label="宏录制器" className="h-[22px] w-full border-b-2 border-r-2 border-t border-b-white border-r-white border-t-[#8a8a8a] bg-[#dcc4c5]" />
        <div className="h-[22px] w-full border-r-2 border-t border-r-[#e4e4e4] border-t-[#8a8a8a] bg-white pr-1 pt-1.5">
          <div className="h-px bg-[#0000d8]" />
        </div>
      </div>
      <div className="my-1 ml-0.5 w-[3px] shrink-0 border-x border-l-[#2d2d2d] border-r-black" />
      <div className="ml-[5px] flex min-w-0 flex-1 flex-col whitespace-nowrap pt-3 text-xs">
        <p className="leading-[18px]">未选定任何对象</p>
        <p className="mt-1.5 flex gap-3 leading-[18px]">
          渲染时间<span className="text-[11px]">0:00:45</span>
        </p>
      </div>

      <div className="flex shrink-0 flex-col pr-8 pt-2">
        <div className="flex h-5 items-center">
          <button type="button" aria-label="孤立当前选择" className="mr-[9px]">
            <svg viewBox="0 0 18 18" className="size-[18px]" fill="none" stroke="#202020" strokeWidth="1.200">
              <path d="M1.500 5V1.500H5M13 1.500h3.500V5M16.500 13v3.500H13M5 16.500H1.500V13" stroke="#8a8a8a" strokeWidth=".8" transform="translate(-.6 -.6)" />
              <path d="M1.500 5V1.500H5M13 1.500h3.500V5M16.500 13v3.500H13M5 16.500H1.500V13M4 4l1 1M14 4l-1 1M4 14l1-1M14 14l-1-1" />
              <rect x="5.500" y="5.500" width="7" height="7" />
            </svg>
          </button>
          <button type="button" aria-label="选择锁定切换" className="mr-[9px]">
            <svg viewBox="0 0 18 18" className="size-[18px]" fill="none" stroke="#232323" strokeWidth="1.300">
              <rect x="3.500" y="7.500" width="11" height="9.500" rx="1" fill="#505050" />
              <path d="M5.500 7.500V5a3.500 3.500 0 0 1 7 0v2.500" strokeWidth="1.800" />
              <path d="M9 10v4" strokeWidth="2.400" />
            </svg>
          </button>
          <button type="button" aria-label="绝对模式变换输入" className="mr-[7px]">
            <svg viewBox="0 0 16 16" className="size-4" fill="none" stroke="#e8e8e8">
              <rect x="1" y="1" width="14" height="14" strokeWidth="1.400" fill="#2f2f2f" />
              <circle cx="8" cy="8" r="3.400" strokeWidth="2" />
              <path d="M8 1v4M8 11v4M1 8h4M11 8h4" strokeWidth="1.500" />
            </svg>
          </button>
          <div className="flex gap-3">
            <Coord axis="X" value="27.445cm" />
            <Coord axis="Y" value="-0.0cm" />
            <Coord axis="Z" value="103.985cm" />
          </div>
          <span className="ml-[15px] whitespace-nowrap text-xs">
            栅格<span className="text-[10px]"> = 10.0cm</span>
          </span>
        </div>
        <div className="mt-1.5 flex h-[21px] items-center pl-[197px]">
          <VSep />
          <button type="button" aria-label="安全场景脚本" className="ml-[5px] flex size-5 items-center justify-center rounded-[3px] bg-[#666666]">
            <svg viewBox="0 0 14 14" className="size-3.5">
              <path d="M7 .5l5.500 2v4.500c0 3.500-2.500 5.500-5.500 6.500-3-1-5.500-3-5.500-6.500V2.500z" fill="#dedede" />
              <path d="M7 2v5H2.600V3.500zM7 7h4.400c0 2.400-1.800 4-4.400 5z" fill="#4a4a4a" />
            </svg>
          </button>
          <span className="ml-1.5 w-[34px] whitespace-nowrap text-xs">启用:</span>
          <span className="ml-0.5 size-[9px] rounded-full bg-[#4fdf3c]" />
          <button type="button" aria-label="错误数" className="ml-1.5 flex size-5 items-center justify-center rounded-[3px] bg-[#666666]">
            <span className="flex size-3.5 items-center justify-center rounded-full bg-[#f2f2f2] text-[11px] font-bold leading-none text-[#444]">0</span>
          </button>
          <span className="ml-1.5"><VSep /></span>
          <button type="button" aria-label="自适应降级" className="ml-[5px] flex size-[21px] items-center justify-center rounded-[3px] bg-[#5d89c6]">
            <svg viewBox="0 0 14 14" className="size-3.5" fill="none" stroke="#2b2b2b" strokeWidth="2.400">
              <path d="M7 1l5.500 3v6L7 13 1.500 10V4zM1.500 4L7 7l5.500-3M7 7v6" />
              <path d="M7 1l5.500 3v6L7 13 1.500 10V4zM1.500 4L7 7l5.500-3M7 7v6" stroke="#e4ecf6" strokeWidth="1" />
            </svg>
          </button>
          <button type="button" className="ml-[5px] whitespace-nowrap text-[11px] text-[#dcdcdc]">添加时间标记</button>
        </div>
      </div>

      <div className="flex shrink-0 flex-col pt-2">
        <div className="flex h-5 items-center">
          <PlayBtn label="转至开头"><path d="M1 1h2v10H1zM9 1v10L3 6zM15 1v10L9 6z" /></PlayBtn>
          <VSep />
          <PlayBtn label="上一帧"><path d="M7 1v10L1 6zM9 1h2v10H9zM13 1h2v10h-2z" /></PlayBtn>
          <button type="button" aria-label="播放动画" className="relative flex h-5 w-[23px] items-center justify-center">
            <svg viewBox="0 0 12 14" className="h-3.5 w-3" fill={L}><path d="M0 0l12 7-12 7z" /></svg>
            <svg viewBox="0 0 4 4" className="absolute -bottom-px right-0 size-1"><path d="M4 0V4H0Z" fill="#e8e8e8" /></svg>
          </button>
          <PlayBtn label="下一帧"><path d="M1 1h2v10H1zM5 1h2v10H5zM9 1v10l6-5z" /></PlayBtn>
          <VSep />
          <PlayBtn label="转至结尾"><path d="M1 1v10l6-5zM7 1v10l6-5zM13 1h2v10h-2z" /></PlayBtn>
        </div>
        <div className="mt-0.5 flex h-5 items-center">
          <PlayBtn label="关键点模式切换"><path d="M6.500 1.500v9L2 6zM9.500 1.500v9L14 6z" /></PlayBtn>
          <VSep />
          <div className="relative flex h-[18px] w-[70px] items-center border border-[#505050] bg-[#636363]">
            <input aria-label="当前帧" defaultValue="0" className="w-full pl-0.5 text-[11px] leading-4 text-[#e4e4e4]" />
            <svg viewBox="0 0 6 9" className="absolute right-[3px] h-[9px] w-1.5" fill="#dcdcdc"><path d="M3 0l3 3.500H0zM3 9l3-3.500H0z" /></svg>
          </div>
          <span className="ml-px"><VSep /></span>
          <button type="button" aria-label="时间配置" className="ml-1">
            <svg viewBox="0 0 16 16" className="size-4" fill="none">
              <circle cx="6.500" cy="6.500" r="5.800" fill={L} />
              <path d="M6.500 2.500v4.500H10" stroke="#444" strokeWidth="1.200" />
              <circle cx="11" cy="11" r="3" fill="#444" stroke={Y} strokeWidth="2" />
              <circle cx="11" cy="11" r="4.200" stroke={Y} strokeWidth="1.400" strokeDasharray="1.600 1.600" />
            </svg>
          </button>
        </div>
      </div>

      <button type="button" aria-label="设置关键点" className="ml-3 mt-2 flex h-[42px] w-10 shrink-0 items-center rounded-l-[3px] bg-[#666666] pl-1.5">
        <svg viewBox="0 0 28 28" className="size-7" fill="none">
          <path d="M12 0v25M-.5 12.500h25" stroke="#3a3a3a" strokeWidth="6.400" />
          <path d="M12 1v23M.5 12.500h23" stroke="#d6d6d6" strokeWidth="4.800" />
          <path d="M16 24L26 16" stroke="#666" strokeWidth="5" />
          <circle cx="17" cy="23.500" r="3" stroke={T} strokeWidth="2" fill="#666" />
          <path d="M19 21.500l8-6.500M23 18.500l2 2.500M26 16l1.500 2" stroke={T} strokeWidth="2" />
        </svg>
      </button>
    </footer>
  );
}

/* ---------- watermark layer ---------- */

function Watermarks() {
  const zh = { fontFamily: "'Noto Sans CJK SC', sans-serif", fontSize: 35, fontWeight: 500, textAnchor: "middle" };
  const en = { fontFamily: "Lato, sans-serif", fontSize: 24, fontWeight: 700, textAnchor: "middle" };
  return (
    <div aria-hidden="true" className="pointer-events-none absolute inset-0 overflow-hidden">
      <svg className="size-full">
        <defs>
          <pattern id="mark" width="791" height="412" patternUnits="userSpaceOnUse">
            <g fill="#ffffff" fillOpacity=".08" stroke="#ffffff" strokeOpacity=".1" strokeWidth="1.400" strokeLinejoin="round">
              <text x="199" y="116" {...zh}>欧模网</text>
              <text x="396" y="322" {...zh}>欧模网</text>
            </g>
            <g fill="#ffffff" fillOpacity=".14">
              <text x="594" y="110" {...en}>www.om.cn</text>
              <text x="0" y="316" {...en}>www.om.cn</text>
              <text x="791" y="316" {...en}>www.om.cn</text>
            </g>
          </pattern>
        </defs>
        <rect width="100%" height="962" fill="url(#mark)" />
      </svg>
      <span className="absolute bottom-[104px] right-[92px] font-['Noto_Sans_CJK_SC',sans-serif] text-[64px] font-medium leading-[64px] text-[#f5f5f5]">
        欧模网
      </span>
    </div>
  );
}

export default function App() {
  return (
    <div className="relative flex h-screen flex-col overflow-hidden bg-[#444444]">
      <MenuBar />
      <Toolbar />
      <Viewport />
      <div className="relative shrink-0">
        <TimeSlider />
        <Ruler />
        <Grip className="absolute left-0 top-2 h-11 w-1" />
      </div>
      <StatusBar />
      <Watermarks />
    </div>
  );
}
